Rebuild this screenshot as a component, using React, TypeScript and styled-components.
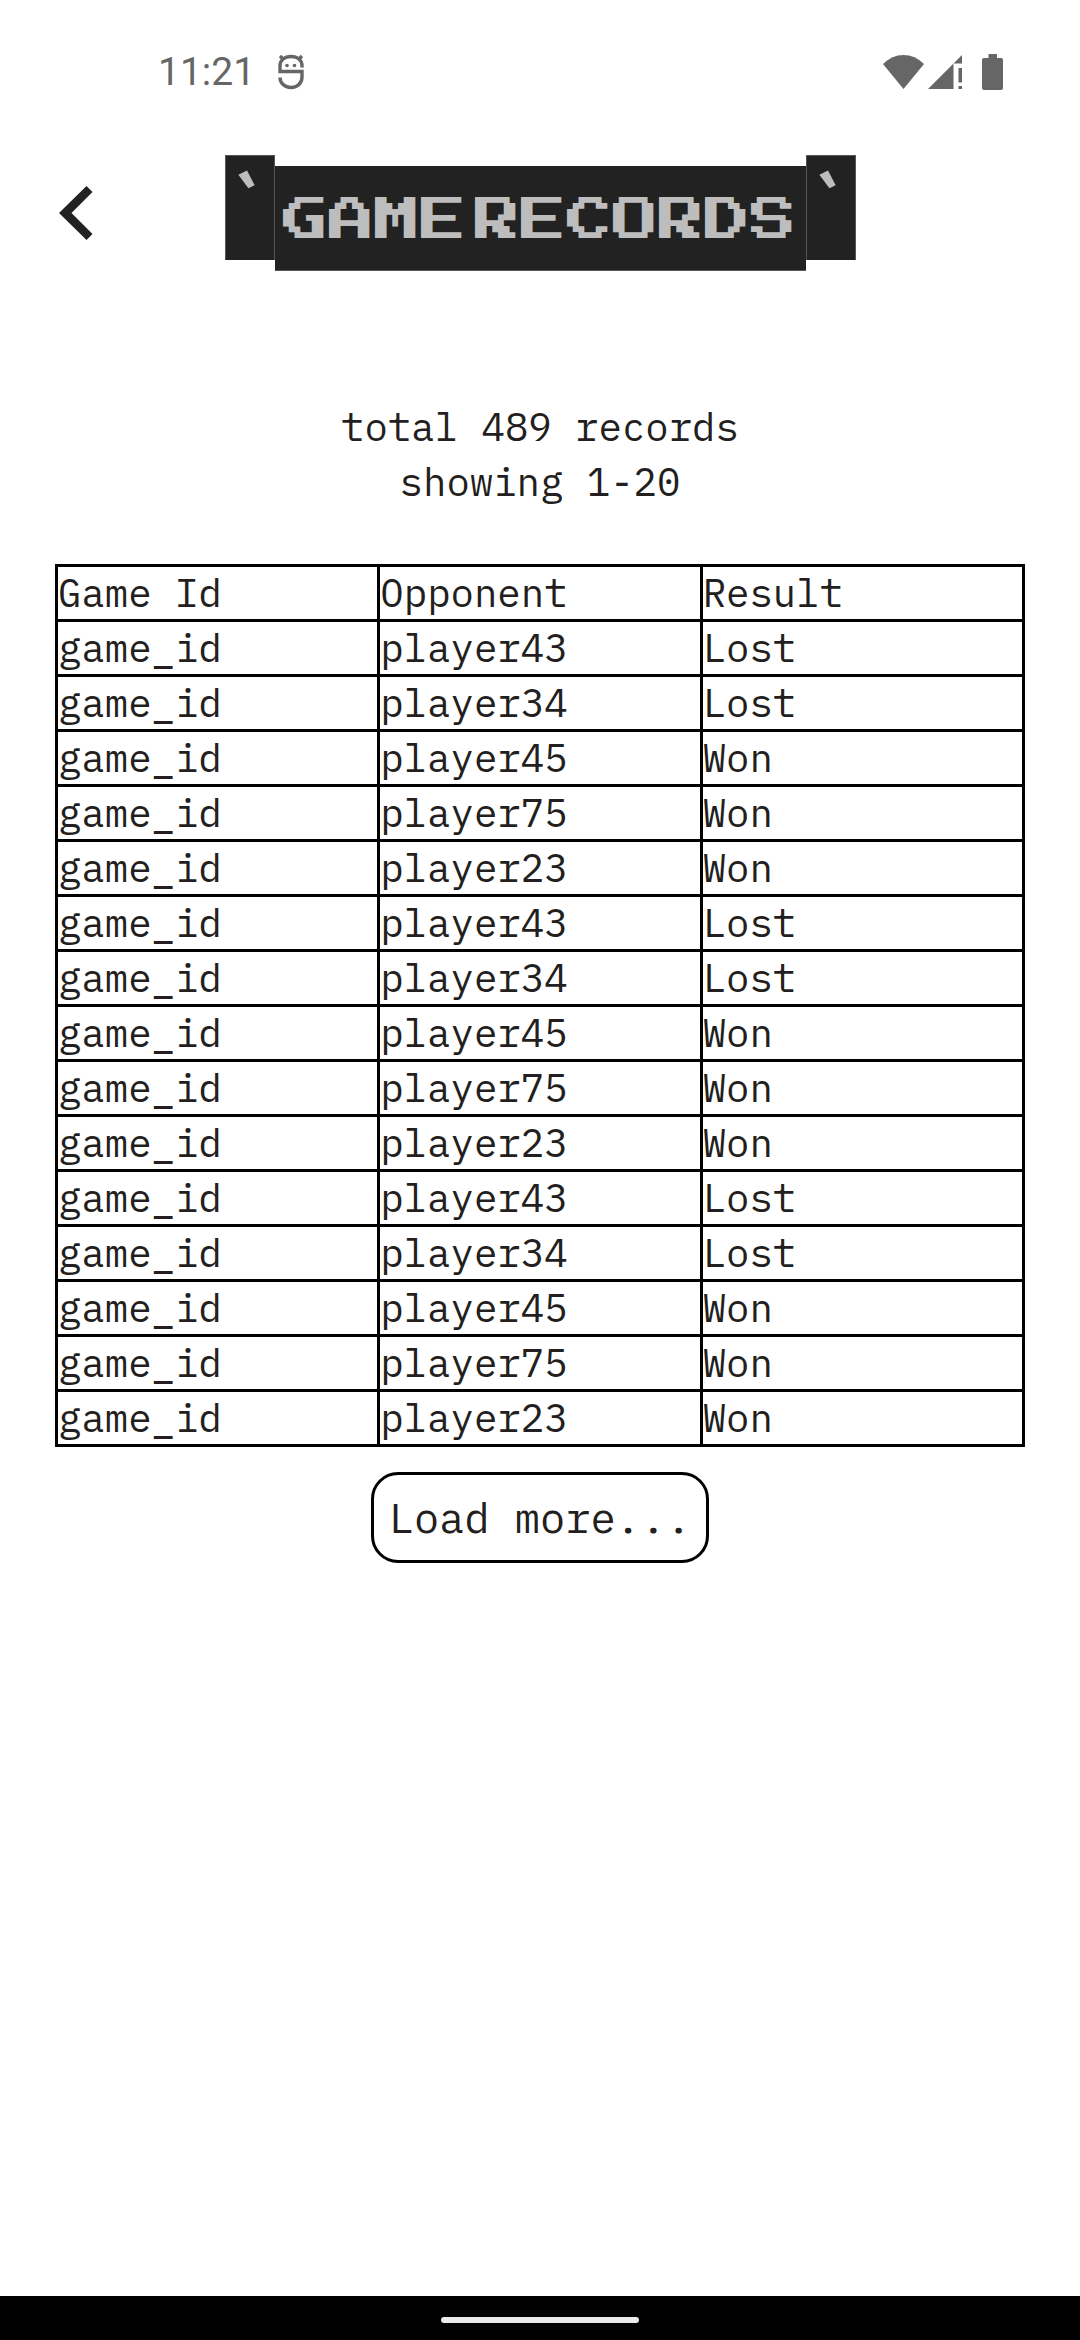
import React from "react";
import styled, { createGlobalStyle } from "styled-components";

const ink = "#231f20";
const status = "#666666";
const mono = `"IBM Plex Mono", "Liberation Mono", monospace`;

const GlobalStyle = createGlobalStyle`
  *, *::before, *::after { box-sizing: border-box; }
  body { margin: 0; background: #ffffff; }
`;

const Screen = styled.div`
  display: flex;
  flex-direction: column;
  min-height: 100vh;
  background: #ffffff;
  color: ${ink};
  font-family: ${mono};
  font-size: 39px;
  font-weight: 400;
`;

const StatusBar = styled.div`
  display: flex;
  align-items: center;
  justify-content: space-between;
  height: 143px;
  padding: 0 77px 0 158px;
  color: ${status};
  font-family: Roboto, sans-serif;
`;

const StatusGroup = styled.div<{ $gap: number }>`
  display: flex;
  align-items: center;
  gap: ${(p) => p.$gap}px;
  svg { display: block; }
`;

const SignalPair = styled.div`
  display: flex;
  gap: 4px;
`;

const Header = styled.header`
  display: grid;
  grid-template-columns: 1fr auto 1fr;
  align-items: start;
  padding: 12px 55px 0;
`;

const BackButton = styled.button`
  justify-self: start;
  display: flex;
  align-items: center;
  height: 116px;
  padding: 0 4px;
  border: 0;
  background: none;
  color: #222222;
  cursor: pointer;
`;

const Banner = styled.div`
  display: flex;
  align-items: flex-start;
  color: #bdbdbd;
`;

const BannerEnd = styled.span`
  width: 50px;
  height: 105px;
  border: 1px solid #555555;
  border-bottom: 0;
  background: #222222;
  font-size: 80px;
  font-weight: 600;
  line-height: 96px;
`;

const BannerTitle = styled.h1`
  display: flex;
  align-items: center;
  justify-content: center;
  gap: 8px;
  width: 531px;
  height: 105px;
  margin: 11px 0 0;
  padding-top: 6px;
  border-bottom: 1px solid #555555;
  background: #222222;
  font-family: "Press Start 2P", "DejaVu Sans", sans-serif;
  font-size: 46px;
  font-weight: 400;
  line-height: 48px;
  white-space: nowrap;
`;

const Content = styled.main`
  flex: 1;
  display: flex;
  flex-direction: column;
  align-items: center;
  padding: 128px 55px 0;
`;

const Summary = styled.p`
  margin: 0 0 55px;
  line-height: 55px;
  text-align: center;
`;

const Records = styled.table`
  width: 100%;
  table-layout: fixed;
  border-collapse: collapse;

  th, td {
    padding: 0;
    border: 3px solid #000000;
    font-weight: 400;
    line-height: 52px;
    text-align: left;
  }
`;

const LoadMore = styled.button`
  margin-top: 25px;
  padding: 18px 15px 17px;
  border: 3px solid #000000;
  border-radius: 27px;
  background: #ffffff;
  color: ${ink};
  font-family: ${mono};
  font-size: 42px;
  font-weight: 400;
  line-height: 50px;
  cursor: pointer;
`;

const NavBar = styled.footer`
  display: flex;
  align-items: center;
  justify-content: center;
  height: 44px;
  padding-top: 4px;
  background: #000000;
`;

const Handle = styled.div`
  width: 198px;
  height: 6px;
  border-radius: 3px;
  background: #ebebeb;
`;

const BugIcon = () => (
  <svg width="26" height="36" viewBox="0 0 26 36" fill="none" stroke={status} strokeWidth="3.4" aria-hidden="true">
    <path d="M24 13.5V12C24 6 19.500 2.500 13 2.500S2 6 2 12V17.500H24V23C24 29 19.500 33.500 13 33.500S2 29 2 23.500" />
    <path d="M2 2L6 6M24 2L20 6" />
    <circle cx="9" cy="11.500" r="1.800" fill={status} stroke="none" />
    <circle cx="16.500" cy="11.500" r="1.800" fill={status} stroke="none" />
  </svg>
);

const WifiIcon = () => (
  <svg width="41" height="34" viewBox="0 0 41 34" fill={status} aria-hidden="true">
    <path d="M20.500 34L0 9Q9 0 20.500 0T41 9Z" />
  </svg>
);

const SignalIcon = () => (
  <svg width="34" height="34" viewBox="0 0 34 34" fill={status} aria-hidden="true">
    <path d="M34 0V8.500H25.500V34H0ZM30.500 13H34V27.500H30.500ZM30.500 31H34V34H30.500Z" />
  </svg>
);

const BatteryIcon = () => (
  <svg width="21" height="36" viewBox="0 0 21 36" fill={status} aria-hidden="true">
    <path d="M6.500 0H15V4H19Q21 4 21 6V34Q21 36 19 36H2Q0 36 0 34V6Q0 4 2 4H6.500Z" />
  </svg>
);

const ChevronIcon = () => (
  <svg width="34" height="54" viewBox="0 0 34 54" fill="currentColor" aria-hidden="true">
    <path d="M27.500 0L33.500 6L12.500 27L33.500 48L27.500 54L0 27Z" />
  </svg>
);

const games = [
  { opponent: "player43", result: "Lost" },
  { opponent: "player34", result: "Lost" },
  { opponent: "player45", result: "Won" },
  { opponent: "player75", result: "Won" },
  { opponent: "player23", result: "Won" },
];
const rows = [...games, ...games, ...games];

export default function App() {
  return (
    <Screen>
      <GlobalStyle />
      <StatusBar>
        <StatusGroup $gap={23}>
          <span>11:21</span>
          <BugIcon />
        </StatusGroup>
        <StatusGroup $gap={20}>
          <SignalPair>
            <WifiIcon />
            <SignalIcon />
          </SignalPair>
          <BatteryIcon />
        </StatusGroup>
      </StatusBar>
      <Header>
        <BackButton aria-label="Back">
          <ChevronIcon />
        </BackButton>
        <Banner>
          <BannerEnd>`</BannerEnd>
          <BannerTitle>
            <span>GAME</span> <span>RECORDS</span>
          </BannerTitle>
          <BannerEnd>`</BannerEnd>
        </Banner>
      </Header>
      <Content>
        <Summary>
          total 489 records
          <br />
          showing 1-20
        </Summary>
        <Records>
          <thead>
            <tr>
              <th scope="col">Game Id</th>
              <th scope="col">Opponent</th>
              <th scope="col">Result</th>
            </tr>
          </thead>
          <tbody>
            {rows.map((row, i) => (
              <tr key={i}>
                <td>game_id</td>
                <td>{row.opponent}</td>
                <td>{row.result}</td>
              </tr>
            ))}
          </tbody>
        </Records>
        <LoadMore>Load more...</LoadMore>
      </Content>
      <NavBar>
        <Handle />
      </NavBar>
    </Screen>
  );
}
